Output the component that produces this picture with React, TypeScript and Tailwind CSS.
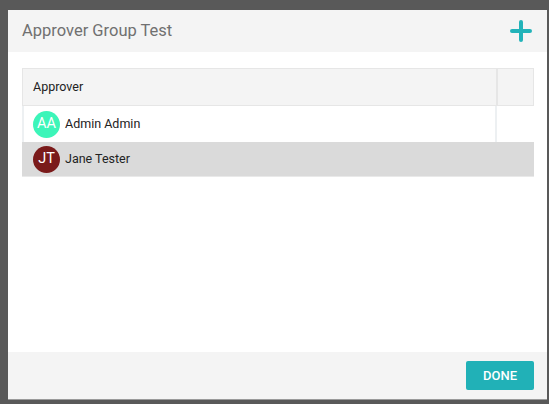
const approvers = [
  { initials: 'AA', name: 'Admin Admin', color: 'bg-[#3cf5b9]', selected: false },
  { initials: 'JT', name: 'Jane Tester', color: 'bg-[#7a1a1a]', selected: true },
];

export default function App() {
  return (
    <div className="flex h-[404px] w-[549px] bg-[#595959] pl-[8px] pr-[2px] pt-[10px] pb-[5px] font-['Roboto',sans-serif]">
      <div className="flex flex-1 flex-col bg-white shadow-[0_1px_0_#9a9a9a]">
        <header className="flex h-[42px] items-center justify-between bg-[#f4f4f4] pl-[14px] pr-[15px]">
          <h1 className="text-[16.5px] text-[#707070]">Approver Group Test</h1>
          <svg width="22" height="22" viewBox="0 0 22 22">
            <path d="M11 2v18M2 11h18" stroke="#22b3b9" strokeWidth="4" strokeLinecap="round" />
          </svg>
        </header>

        <div className="flex-1 pl-[14px] pr-[13px] pt-[16px]">
          <div className="flex h-[38px] border border-[#e6e6e6] bg-[#f4f4f4]">
            <div className="flex flex-1 items-center border-r-2 border-[#e6e6e6] pl-[10px] text-[12.5px] text-[#222]">
              Approver
            </div>
            <div className="w-[35px]" />
          </div>
          {approvers.map((a) => (
            <div
              key={a.name}
              className={
                a.selected
                  ? 'flex h-[35px] items-center border-b border-[#e9e9e9] bg-[#dadada] pl-[11px]'
                  : 'mr-[37px] flex h-[36px] items-center border-x-2 border-[#edf0f2] bg-white pl-[9px]'
              }
            >
              <div
                className={`flex h-[27px] w-[27px] items-center justify-center rounded-full text-[14.5px] text-white ${a.color}`}
              >
                {a.initials}
              </div>
              <span className="ml-[5px] text-[12.5px] text-[#222]">{a.name}</span>
            </div>
          ))}
        </div>

        <footer className="flex h-[47px] items-center justify-end bg-[#f4f4f4] pr-[13px]">
          <button
            type="button"
            className="h-[29px] w-[68px] rounded-[2px] bg-[#21b1b7] text-[13px] font-medium text-white"
          >
            DONE
          </button>
        </footer>
      </div>
    </div>
  );
}
